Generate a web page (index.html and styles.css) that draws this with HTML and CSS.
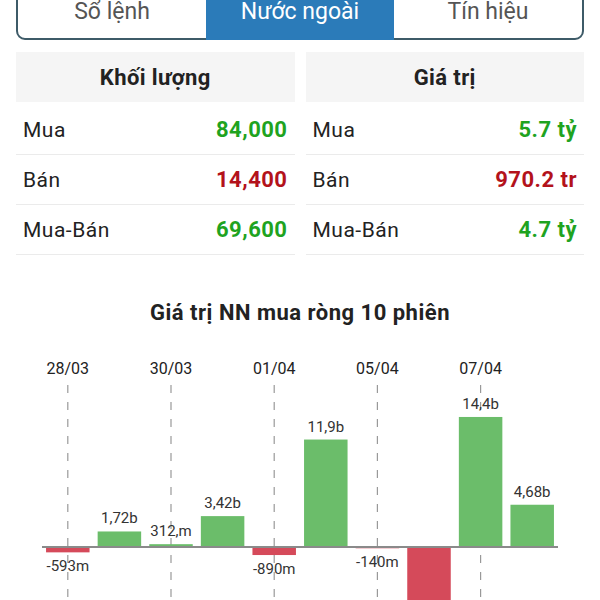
FILE: index.html
```html
<!DOCTYPE html>
<html lang="vi">
<head>
  <meta charset="UTF-8">
  <meta name="viewport" content="width=device-width, initial-scale=1.0">
  <title>Nước ngoài</title>
  <link rel="stylesheet" href="styles.css">
</head>
<body>
  <div class="page">
    <div class="tabs">
      <div class="tab">Sổ lệnh</div>
      <div class="tab active">Nước ngoài</div>
      <div class="tab">Tín hiệu</div>
    </div>

    <div class="summary">
      <div class="table">
        <div class="table-head">Khối lượng</div>
        <div class="row"><span class="label">Mua</span><span class="value up">84,000</span></div>
        <div class="row"><span class="label">Bán</span><span class="value down">14,400</span></div>
        <div class="row"><span class="label">Mua-Bán</span><span class="value up">69,600</span></div>
      </div>
      <div class="table">
        <div class="table-head">Giá trị</div>
        <div class="row"><span class="label">Mua</span><span class="value up">5.7 tỷ</span></div>
        <div class="row"><span class="label">Bán</span><span class="value down">970.2 tr</span></div>
        <div class="row"><span class="label">Mua-Bán</span><span class="value up">4.7 tỷ</span></div>
      </div>
    </div>

    <h2 class="chart-title">Giá trị NN mua ròng 10 phiên</h2>
    <svg id="chart" class="chart" width="568" height="260"></svg>
  </div>

  <script>
    // Net foreign buying per session (billions)
    const sessions = [
      { date: "28/03", value: -0.593, label: "-593m" },
      { date: "29/03", value: 1.72, label: "1,72b" },
      { date: "30/03", value: 0.312, label: "312,m" },
      { date: "31/03", value: 3.42, label: "3,42b" },
      { date: "01/04", value: -0.89, label: "-890m" },
      { date: "04/04", value: 11.9, label: "11,9b" },
      { date: "05/04", value: -0.14, label: "-140m" },
      { date: "06/04", value: -9.2, label: "-9,2b" },
      { date: "07/04", value: 14.4, label: "14,4b" },
      { date: "08/04", value: 4.68, label: "4,68b" }
    ];

    const svg = document.getElementById("chart");
    const NS = "http://www.w3.org/2000/svg";
    const left = 26;
    const slot = 51.6;
    const barWidth = 43.5;
    const zeroY = 207;
    const pxPerBillion = 9.03;

    function add(tag, attrs, text) {
      const el = document.createElementNS(NS, tag);
      for (const key in attrs) el.setAttribute(key, attrs[key]);
      if (text) el.textContent = text;
      svg.appendChild(el);
      return el;
    }

    // Date grid lines on every other session
    sessions.forEach((s, i) => {
      if (i % 2) return;
      const cx = left + slot * (i + 0.5);
      add("line", { x1: cx, x2: cx, y1: 45, y2: 260, class: "grid" });
      add("text", { x: cx, y: 34, class: "date" }, s.date);
    });

    // Bars
    sessions.forEach((s, i) => {
      const h = Math.max(Math.abs(s.value) * pxPerBillion, 1);
      const x = left + slot * i + (slot - barWidth) / 2;
      const y = s.value >= 0 ? zeroY - h : zeroY;
      add("rect", { x: x, y: y, width: barWidth, height: h, class: s.value >= 0 ? "bar up" : "bar down" });
    });

    // Zero line
    add("line", { x1: left, x2: left + slot * sessions.length, y1: zeroY, y2: zeroY, class: "axis" });

    // Value labels
    sessions.forEach((s, i) => {
      const h = Math.abs(s.value) * pxPerBillion;
      const cx = left + slot * (i + 0.5);
      const y = s.value >= 0 ? zeroY - h - 8 : zeroY + h + 19;
      add("text", { x: cx, y: y, class: "bar-label" }, s.label);
    });
  </script>
</body>
</html>
```

FILE: styles.css
```css
:root {
  --tab-border: #3e5b68;
  --tab-active: #2b7bb9;
  --head-bg: #f5f5f5;
  --line: #ebebeb;
  --up: #1fa31f;
  --down: #b3121b;
  --bar-up: #6bbd6a;
  --bar-down: #d54a5a;
}
html, body {
  margin: 0;
  overflow: hidden;
}
body {
  font-family: Roboto, "Noto Sans", sans-serif;
  background: #fff;
  color: #222;
}
.page {
  padding: 0 16px;
}
.tabs {
  display: flex;
  margin-top: -14px;
  border: 2px solid var(--tab-border);
  border-radius: 9px;
}
.tab {
  flex: 1;
  text-align: center;
  font-size: 23px;
  line-height: 30px;
  padding: 9px 0 11px;
  color: #555;
}
.tab.active {
  background: var(--tab-active);
  color: #fff;
  margin-bottom: -2px;
}
.summary {
  display: grid;
  grid-template-columns: 1fr 1fr;
  gap: 11px;
  margin-top: 12px;
}
.table-head {
  background: var(--head-bg);
  height: 50px;
  display: flex;
  align-items: center;
  justify-content: center;
  font-size: 22px;
  letter-spacing: 0.4px;
  font-weight: bold;
  color: #222;
  margin-bottom: 3px;
}
.row {
  display: flex;
  justify-content: space-between;
  align-items: center;
  height: 49px;
  padding: 0 7px;
  border-bottom: 1px solid var(--line);
  font-size: 21px;
  letter-spacing: 0.5px;
}
.value {
  font-size: 22px;
  font-weight: bold;
  letter-spacing: 0.5px;
}
.value.up {
  color: var(--up);
}
.value.down {
  color: var(--down);
}
.chart-title {
  margin: 46px 0 0;
  text-align: center;
  font-size: 22px;
  line-height: 24px;
  letter-spacing: 0.5px;
  font-weight: bold;
  color: #222;
}
.chart {
  display: block;
  margin-top: 15px;
  font-family: Roboto, "Noto Sans", sans-serif;
}
.chart .grid {
  stroke: #999;
  stroke-width: 1.2;
  stroke-dasharray: 8 9;
}
.chart .axis {
  stroke: #8a8a8a;
  stroke-width: 2;
}
.chart .bar.up {
  fill: var(--bar-up);
}
.chart .bar.down {
  fill: var(--bar-down);
}
.chart .date {
  font-size: 16px;
  fill: #222;
  text-anchor: middle;
}
.chart .bar-label {
  font-size: 15px;
  fill: #333;
  text-anchor: middle;
}
```
